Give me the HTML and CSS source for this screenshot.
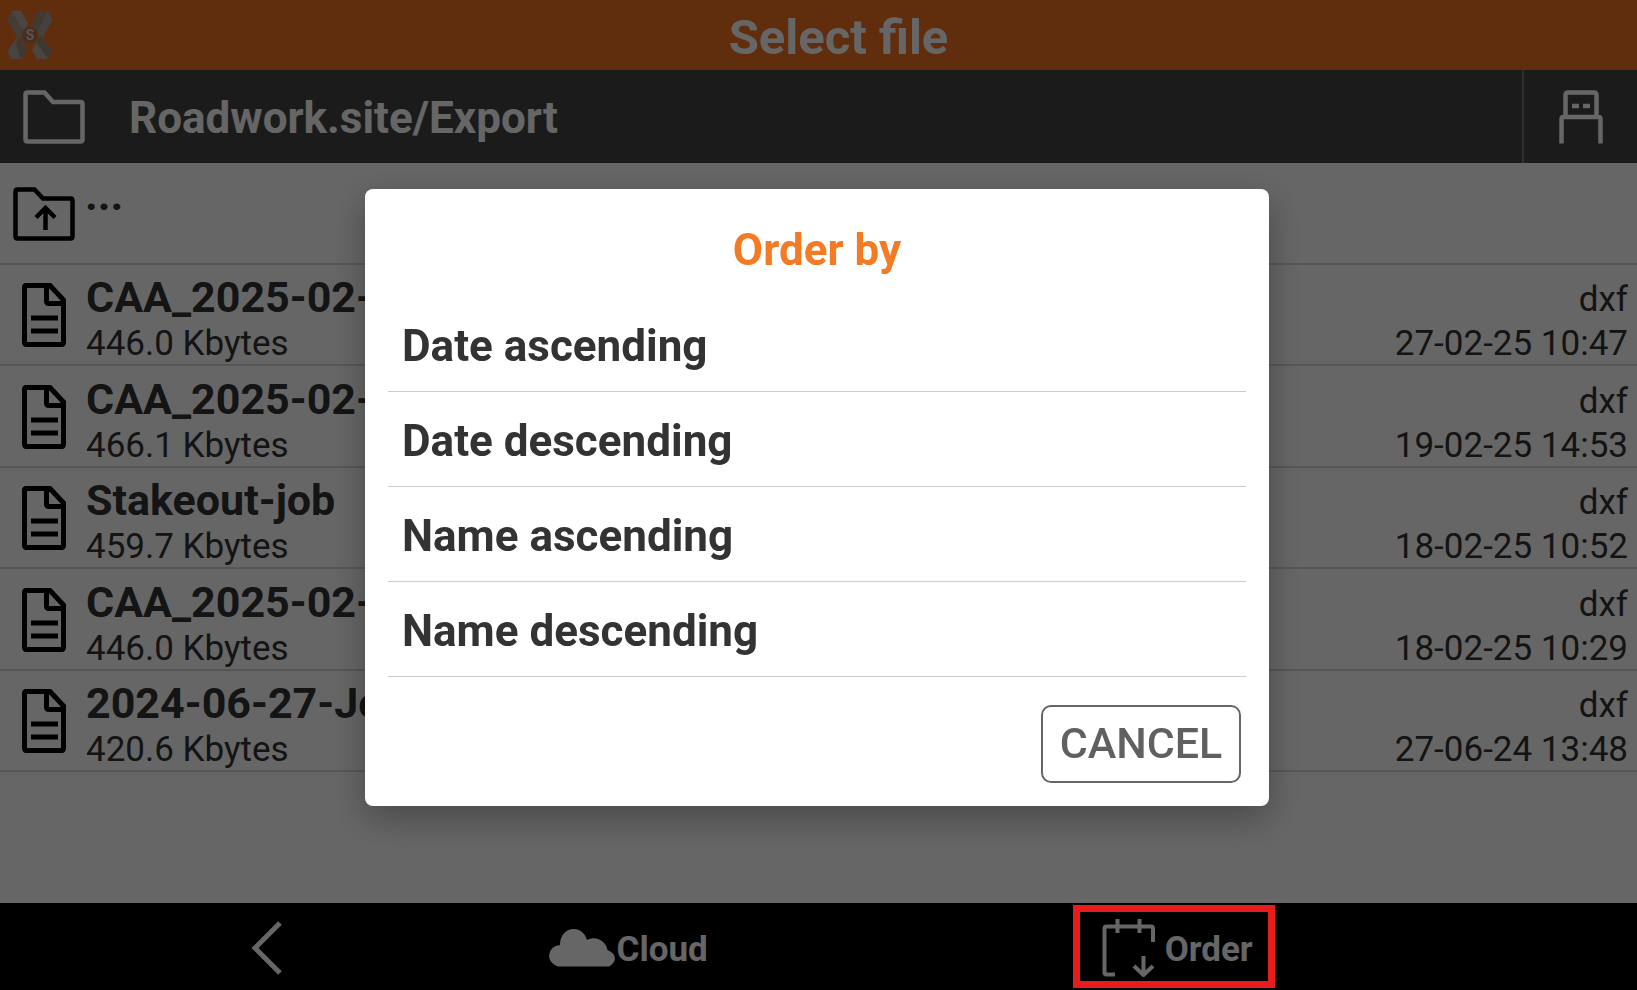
FILE: index.html
```html
<!DOCTYPE html>
<html lang="en">
<head>
<meta charset="utf-8">
<title>Select file</title>
<meta name="viewport" content="width=device-width, initial-scale=1">
<link rel="stylesheet" href="styles.css">
</head>
<body>
<svg class="defs" aria-hidden="true">
  <symbol id="file" viewBox="0 0 48 66">
    <path d="M6 3.500H30L43.500 18V60Q43.500 62.500 41.500 62.500H6.500Q4.500 62.500 4.500 60V5.500Q4.500 3.500 6 3.500ZM26.500 4V19Q26.500 21.500 29 21.500H43M11 36H38M11 49H38" fill="none" stroke="currentColor" stroke-width="5"/>
  </symbol>
</svg>
<div class="screen">
  <header class="titlebar">
    <svg class="logo" viewBox="7 11 46 48" aria-hidden="true">
      <path d="M11.500 11H21L28 24L19 40L7.500 20Z" fill="#b5aca5"/>
      <path d="M7.500 20L11.500 11L24 32L19 40Z" fill="#a8978a"/>
      <path d="M37 11H48L52.500 20L41 40L32 24Z" fill="#a59080"/>
      <path d="M48 11L52.500 20L41 40L37 32Z" fill="#b0a49b"/>
      <path d="M19 35L28 50L21 59H11.500L7.500 51Z" fill="#b0a7a0"/>
      <path d="M19 35L28 50L21 59L16 45Z" fill="#a58a76"/>
      <path d="M41 35L52.500 51L48 59H37L32 50Z" fill="#b5aca5"/>
      <path d="M41 35L52.500 51L48 59L36 42Z" fill="#a58a76"/>
      <circle cx="30" cy="35" r="8" fill="#b0744a"/>
      <text class="logo-letter" x="30" y="40" text-anchor="middle">S</text>
    </svg>
    <h1 class="title">Select file</h1>
  </header>
  <div class="pathbar">
    <svg class="folder" viewBox="0 0 62 54" fill="none" stroke="currentColor" stroke-width="4.500" aria-hidden="true"><path d="M4.500 2.500H21.500L30 12H57.500Q59.500 12 59.500 14V49.500Q59.500 51.500 57.500 51.500H4.500Q2.500 51.500 2.500 49.500V4.500Q2.500 2.500 4.500 2.500Z"/></svg>
    <span class="path">Roadwork.site/Export</span>
    <button class="usb" type="button" aria-label="USB storage">
      <svg class="usb-icon" viewBox="0 0 44 54" fill="none" stroke="currentColor" stroke-width="4.500" aria-hidden="true"><path d="M6.500 27V5Q6.500 2.500 9 2.500H35Q37.500 2.500 37.500 5V27M2.500 53.500V29Q2.500 27 4.500 27H39.500Q41.500 27 41.500 29V53.500M13 16H20M24 16H31"/></svg>
    </button>
  </div>
  <ul class="files">
    <li class="row">
      <svg class="up" viewBox="0 0 62 54" fill="none" stroke="currentColor" stroke-width="4.500" aria-hidden="true"><path d="M4.500 2.500H21.500L30 11.500H57.500Q59.500 11.500 59.500 13.500V49.500Q59.500 51.500 57.500 51.500H4.500Q2.500 51.500 2.500 49.500V4.500Q2.500 2.500 4.500 2.500ZM32.500 43V21M23 30.500L32.500 21L42 30.500"/></svg>
      <span class="parent">...</span>
    </li>
    <li class="row"><svg class="file" aria-hidden="true"><use href="#file"/></svg><div class="info"><span class="name">CAA_2025-02-</span><span>446.0 Kbytes</span></div><div class="meta"><span>dxf</span><span>27-02-25 10:47</span></div></li>
    <li class="row"><svg class="file" aria-hidden="true"><use href="#file"/></svg><div class="info"><span class="name">CAA_2025-02-</span><span>466.1 Kbytes</span></div><div class="meta"><span>dxf</span><span>19-02-25 14:53</span></div></li>
    <li class="row"><svg class="file" aria-hidden="true"><use href="#file"/></svg><div class="info"><span class="name">Stakeout-job</span><span>459.7 Kbytes</span></div><div class="meta"><span>dxf</span><span>18-02-25 10:52</span></div></li>
    <li class="row"><svg class="file" aria-hidden="true"><use href="#file"/></svg><div class="info"><span class="name">CAA_2025-02-</span><span>446.0 Kbytes</span></div><div class="meta"><span>dxf</span><span>18-02-25 10:29</span></div></li>
    <li class="row"><svg class="file" aria-hidden="true"><use href="#file"/></svg><div class="info"><span class="name">2024-06-27-Jo</span><span>420.6 Kbytes</span></div><div class="meta"><span>dxf</span><span>27-06-24 13:48</span></div></li>
  </ul>
  <footer class="toolbar">
    <button class="tool" type="button" aria-label="Back"><svg class="back" viewBox="0 0 32 54" fill="none" stroke="currentColor" stroke-width="5" aria-hidden="true"><path d="M29 2L4 27L29 52"/></svg></button>
    <button class="tool" type="button"><svg class="cloud" viewBox="0 0 66 38" fill="currentColor" aria-hidden="true"><path d="M9 37.500Q0 34 0 26.500Q1 17 11 16C11 7 16 0 25 0C31 0 36 4 38 11C47 6 57 12 58.500 21Q66 24 66 30Q65 35 60 37.500Z"/></svg><span class="label">Cloud</span></button>
    <button class="tool marked" type="button"><svg class="order" viewBox="0 0 54 58" fill="none" stroke="currentColor" stroke-width="4" aria-hidden="true"><path d="M13 55.500H4.500Q2.500 55.500 2.500 53.500V9.500Q2.500 7.500 4.500 7.500H49Q51 7.500 51 9.500V23M15.500 0V14M37.500 0V14M41.500 37V56M32 47L41.500 56L51 47"/></svg><span class="label">Order</span></button>
  </footer>
</div>
<div class="overlay">
  <section class="dialog" role="dialog" aria-modal="true" aria-labelledby="order-title">
    <h2 class="dialog-title" id="order-title">Order by</h2>
    <div class="options">
      <button class="option" type="button">Date ascending</button>
      <button class="option" type="button">Date descending</button>
      <button class="option" type="button">Name ascending</button>
      <button class="option" type="button">Name descending</button>
    </div>
    <button class="cancel" type="button">CANCEL</button>
  </section>
</div>
</body>
</html>
```
FILE: styles.css
```css
*, *::after { box-sizing: border-box; }
body { margin: 0; font-family: Roboto, "Liberation Sans", sans-serif; color: #333; }
h1, h2, ul { margin: 0; padding: 0; }
button { font: inherit; color: inherit; background: none; border: 0; padding: 0; }
svg { display: block; flex: none; }
.defs { position: absolute; width: 0; height: 0; }

.screen { display: flex; flex-direction: column; min-height: 100vh; background: #fff; }

.titlebar { display: grid; grid-template-columns: 1fr auto 1fr; align-items: center; height: 70px; padding: 0 7px; background: #f07321; color: #fff; }
.logo { width: 46px; height: 48px; }
.logo-letter { font-size: 14px; font-weight: 700; fill: #d8d0cb; }
.title { padding: 5px 0 0 40px; font-size: 49px; line-height: 56px; font-weight: 700; }

.pathbar { display: flex; align-items: center; height: 93px; padding-left: 23px; background: #444; color: #fff; }
.folder { width: 62px; height: 54px; }
.path { flex: 1; margin-left: 44px; padding-top: 3px; font-size: 44px; line-height: 52px; font-weight: 700; }
.usb { display: flex; align-items: center; justify-content: center; width: 115px; height: 100%; border-left: 2px solid #777; }
.usb-icon { width: 44px; height: 54px; }

.files { flex: 1; display: grid; grid-template-rows: repeat(6, 1fr); padding-bottom: 131px; list-style: none; font-size: 35px; line-height: 36px; }
.row { display: flex; align-items: center; padding: 2px 9px 0 20px; border-bottom: 2px solid #d8d8d8; }
.row:first-child { align-items: flex-start; padding: 24px 13px 0; }
.up { width: 62px; height: 54px; color: #000; }
.parent { margin-left: 10px; font-size: 44px; line-height: 16px; font-weight: 700; }
.file { width: 48px; height: 66px; color: #000; }
.info, .meta { display: flex; flex-direction: column; align-self: flex-end; padding-bottom: 2px; }
.info { flex: 1; gap: 5px; margin-left: 18px; }
.name { font-size: 43px; line-height: 48px; font-weight: 700; }
.meta { gap: 8px; text-align: right; }

.toolbar { display: grid; grid-template-columns: 534fr 186fr 914fr; height: 87px; padding-top: 2px; background: #000; color: #fff; }
.tool { position: relative; display: flex; align-items: center; justify-content: center; font-size: 35px; font-weight: 700; }
.back { width: 32px; height: 54px; }
.cloud { width: 66px; height: 38px; margin-right: 2px; }
.order { width: 54px; height: 58px; margin-right: 9px; }
.label { padding-top: 4px; }
.marked { padding-right: 4px; }
.marked::after { content: ""; position: absolute; z-index: 3; top: 0; left: 50%; width: 202px; height: 83px; margin-left: -106px; border: 7px solid #e71c1c; }

.overlay { position: fixed; inset: 0; z-index: 2; display: flex; align-items: center; justify-content: center; padding: 5px 3px 0 0; background: rgba(0, 0, 0, .6); }
.dialog { display: flex; flex-direction: column; width: 904px; max-width: 100%; padding: 35px 23px 23px; border-radius: 8px; background: #fff; box-shadow: 0 12px 36px rgba(0, 0, 0, .3); }
.dialog-title { font-size: 44px; line-height: 52px; font-weight: 700; text-align: center; color: #f47b25; }
.options { display: flex; flex-direction: column; margin: 21px 0 28px; }
.option { height: 95px; padding: 3px 0 0 14px; border-bottom: 1px solid #ccc; font-size: 44px; font-weight: 700; text-align: left; }
.cancel { align-self: flex-end; width: 200px; height: 78px; margin-right: 5px; padding-bottom: 2px; border: 2px solid #666; border-radius: 10px; color: #606060; font-size: 43px; font-weight: 500; }
```
